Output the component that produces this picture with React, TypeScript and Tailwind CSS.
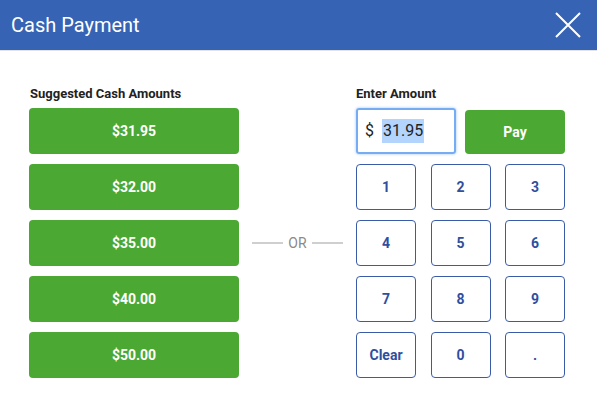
export default function App() {
  const keys = ["1", "2", "3", "4", "5", "6", "7", "8", "9", "Clear", "0", "."];
  const amounts = ["$31.95", "$32.00", "$35.00", "$40.00", "$50.00"];
  return (
    <div className="w-[597px] h-[416px] bg-white" style={{ fontFamily: "Roboto, 'Liberation Sans', sans-serif" }}>
      <div className="h-[51px] bg-[#3663b4] border-b border-[#e3e3e3] flex items-center justify-between pl-[11px] pr-[16px]">
        <span className="text-white text-[20px] leading-none">Cash Payment</span>
        <svg width="26" height="26" viewBox="0 0 26 26" stroke="white" strokeWidth="2" fill="none">
          <path d="M1 1L25 25M25 1L1 25" />
        </svg>
      </div>
      <div className="flex pl-[29px] pt-[33px]">
        <div className="w-[210px] flex flex-col">
          <div className="text-[13px] font-bold text-[#222] h-[24px] pl-[1px]">Suggested Cash Amounts</div>
          <div className="flex flex-col gap-[10px]">
            {amounts.map((a) => (
              <button key={a} className="h-[46px] rounded-[4px] bg-[#4aa833] text-white font-bold text-[14px]">
                {a}
              </button>
            ))}
          </div>
        </div>
        <div className="w-[117px] flex items-center justify-center pt-[24px]">
          <div className="flex items-center gap-[5px]">
            <div className="w-[31px] h-[2px] bg-[#cfcfcf]" />
            <span className="text-[14px] text-[#8a8a8a]">OR</span>
            <div className="w-[31px] h-[2px] bg-[#cfcfcf]" />
          </div>
        </div>
        <div className="w-[209px] flex flex-col">
          <div className="text-[13px] font-bold text-[#222] h-[24px]">Enter Amount</div>
          <div className="flex gap-[9px] h-[46px] items-end">
            <div className="w-[100px] h-[46px] border-2 border-[#76acf2] rounded-[3px] shadow-[0_0_3px_#9cc4f7] flex items-center pl-[7px] text-[16px] text-[#222]">
              <span>$</span>
              <span className="ml-[8px] bg-[#b3d4fc] px-[1px]">31.95</span>
            </div>
            <button className="w-[100px] h-[44px] rounded-[4px] bg-[#4aa833] text-white font-bold text-[14px]">Pay</button>
          </div>
          <div className="grid grid-cols-[60px_60px_60px] gap-x-[14.5px] gap-y-[10px] mt-[10px]">
            {keys.map((k) => (
              <button key={k} className="h-[46px] rounded-[4px] border border-[#3a5ca8] text-[#2f4f9f] font-bold text-[14px]">
                {k}
              </button>
            ))}
          </div>
        </div>
      </div>
    </div>
  );
}
